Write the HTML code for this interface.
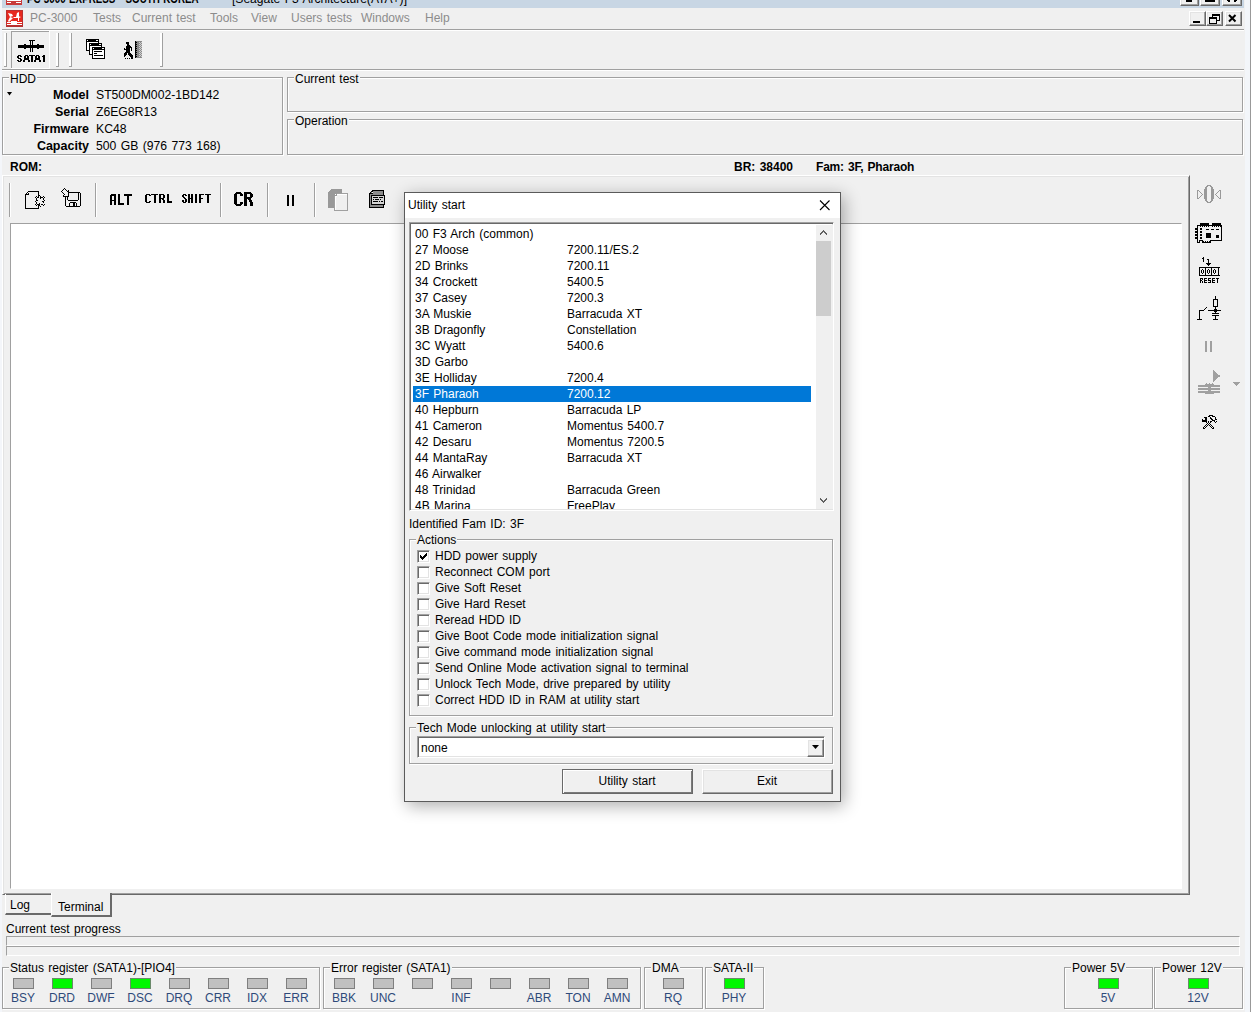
<!DOCTYPE html><html><head><meta charset="utf-8"><style>
*{margin:0;padding:0;box-sizing:border-box}
html,body{width:1251px;height:1012px;overflow:hidden;background:#f0f0f0;font-family:"Liberation Sans",sans-serif;font-size:12px;color:#000;word-spacing:1px}
.a{position:absolute}
.t{position:absolute;white-space:nowrap;font-size:12px;line-height:12px}
.b{font-weight:bold}
.r{text-align:right}
.gb{position:absolute;border:1px solid #a0a0a0;box-shadow:1px 1px 0 #fff, inset 1px 1px 0 #fff}
.gl{position:absolute;white-space:nowrap;font-size:12px;line-height:12px;background:#f0f0f0;padding:0 1px}
.led{position:absolute;width:21px;height:11px;background:#c0c0c0;border:1px solid #7f7f7f}
.led.on{background:#00f800;border-color:#6a8a6a}
.ll{position:absolute;white-space:nowrap;font-size:12px;line-height:12px;color:#2e4a7a;width:40px;text-align:center}
.menu{color:#8c8c8c}
.cb{position:absolute;width:13px;height:13px;background:#fff;border-top:1px solid #a0a0a0;border-left:1px solid #a0a0a0;border-right:1px solid #fff;border-bottom:1px solid #fff;box-shadow:inset 1px 1px 0 #696969, inset -1px -1px 0 #e3e3e3}
.btn{position:absolute;background:#f0f0f0;border-top:1px solid #fff;border-left:1px solid #fff;border-right:1px solid #696969;border-bottom:1px solid #696969;box-shadow:inset -1px -1px 0 #a0a0a0, inset 1px 1px 0 #e3e3e3}
</style></head><body>
<div class="a" style="left:0px;top:0px;width:2px;height:1012px;background:#f4f6fa;"></div>
<div class="a" style="left:2px;top:0px;width:1242px;height:8px;background:#c8d6e4;"></div>
<div class="a" style="left:1245px;top:0px;width:5px;height:1012px;background:#f3f6fa;"></div>
<div class="a" style="left:1250px;top:0px;width:1px;height:1012px;background:#999;"></div>
<svg class="a" style="left:0;top:0" width="420" height="8"><text x="27" y="3" font-family="Liberation Sans" font-weight="bold" font-size="12" textLength="178" lengthAdjust="spacingAndGlyphs">PC-3000 EXPRESS - SOUTH KOREA -</text><text x="232" y="3" font-family="Liberation Sans" font-size="12" textLength="175" lengthAdjust="spacingAndGlyphs">[Seagate F3 Architecture(ATA+)]</text></svg>
<div class="a" style="left:6px;top:0px;width:16px;height:5px;background:#d03030;"></div>
<div class="btn" style="left:1180px;top:-8px;width:19px;height:14px"></div>
<div class="btn" style="left:1200px;top:-8px;width:20px;height:14px"></div>
<div class="btn" style="left:1222px;top:-8px;width:20px;height:14px"></div>
<div class="a" style="left:6px;top:10px;width:17px;height:17px;background:#d8302a;"></div>
<div class="t menu" style="left:30px;top:12px;">PC-3000</div>
<div class="t menu" style="left:93px;top:12px;">Tests</div>
<div class="t menu" style="left:132px;top:12px;">Current test</div>
<div class="t menu" style="left:210px;top:12px;">Tools</div>
<div class="t menu" style="left:251px;top:12px;">View</div>
<div class="t menu" style="left:291px;top:12px;">Users tests</div>
<div class="t menu" style="left:361px;top:12px;">Windows</div>
<div class="t menu" style="left:425px;top:12px;">Help</div>
<div class="btn" style="left:1189px;top:11px;width:17px;height:15px"></div>
<div class="btn" style="left:1206px;top:11px;width:17px;height:15px"></div>
<div class="btn" style="left:1225px;top:11px;width:17px;height:15px"></div>
<div class="a" style="left:2px;top:29px;width:1242px;height:1px;background:#a0a0a0;"></div>
<div class="a" style="left:2px;top:30px;width:1242px;height:1px;background:#fff;"></div>
<div class="a" style="left:2px;top:69px;width:1242px;height:1px;background:#a0a0a0;"></div>
<div class="a" style="left:2px;top:70px;width:1242px;height:1px;background:#fff;"></div>
<div class="gb" style="left:2px;top:77px;width:281px;height:78px"></div>
<div class="gl" style="left:9px;top:73px">HDD</div>
<div class="t b r" style="left:0px;width:89px;top:89px;font-size:12.5px">Model</div>
<div class="t " style="left:96px;top:89px;font-size:12.2px">ST500DM002-1BD142</div>
<div class="t b r" style="left:0px;width:89px;top:106px;font-size:12.5px">Serial</div>
<div class="t " style="left:96px;top:106px;font-size:12.2px">Z6EG8R13</div>
<div class="t b r" style="left:0px;width:89px;top:123px;font-size:12.5px">Firmware</div>
<div class="t " style="left:96px;top:123px;font-size:12.2px">KC48</div>
<div class="t b r" style="left:0px;width:89px;top:140px;font-size:12.5px">Capacity</div>
<div class="t " style="left:96px;top:140px;font-size:12.2px">500 GB (976 773 168)</div>
<div class="gb" style="left:287px;top:77px;width:956px;height:35px"></div>
<div class="gl" style="left:294px;top:73px">Current test</div>
<div class="gb" style="left:287px;top:119px;width:956px;height:36px"></div>
<div class="gl" style="left:294px;top:115px">Operation</div>
<div class="t b" style="left:10px;top:161px;">ROM:</div>
<div class="t b" style="left:734px;top:161px;">BR: 38400</div>
<div class="t b" style="left:816px;top:161px;letter-spacing:-0.2px">Fam: 3F, Pharaoh</div>
<div class="a" style="left:2px;top:175px;width:1188px;height:720px;border-top:1px solid #fff;border-left:1px solid #fff;border-right:1px solid #696969;border-bottom:1px solid #696969;box-shadow:inset 1px 1px 0 #e3e3e3, inset -1px -1px 0 #a0a0a0"></div>
<div class="a" style="left:10px;top:223px;width:1172px;height:666px;background:#fff;border-top:1px solid #a0a0a0;border-left:1px solid #a0a0a0;border-right:1px solid #fff;border-bottom:1px solid #fff"></div>
<div class="a" style="left:5px;top:894px;width:46px;height:21px;border-bottom:2px solid #6a6a6a;border-left:1px solid #fff"></div>
<div class="t " style="left:10px;top:899px;">Log</div>
<div class="a" style="left:51px;top:893px;width:61px;height:24px;background:#f0f0f0;border-right:2px solid #6a6a6a;border-bottom:2px solid #6a6a6a;border-left:1px solid #fff"></div>
<div class="t " style="left:58px;top:901px;">Terminal</div>
<div class="t " style="left:6px;top:923px;">Current test progress</div>
<div class="a" style="left:6px;top:936px;width:1234px;height:10px;background:#f0f0f0;border-top:1px solid #a0a0a0;border-left:1px solid #a0a0a0;border-right:1px solid #fff;border-bottom:1px solid #fff"></div>
<div class="a" style="left:6px;top:946px;width:1234px;height:10px;background:#f0f0f0;border-top:1px solid #a0a0a0;border-left:1px solid #a0a0a0;border-right:1px solid #fff;border-bottom:1px solid #fff"></div>
<div class="gb" style="left:2px;top:967px;width:318px;height:42px"></div>
<div class="gl" style="left:9px;top:962px">Status register (SATA1)-[PIO4]</div>
<div class="led" style="left:13px;top:978px"></div>
<div class="ll" style="left:3px;top:992px">BSY</div>
<div class="led on" style="left:52px;top:978px"></div>
<div class="ll" style="left:42px;top:992px">DRD</div>
<div class="led" style="left:91px;top:978px"></div>
<div class="ll" style="left:81px;top:992px">DWF</div>
<div class="led on" style="left:130px;top:978px"></div>
<div class="ll" style="left:120px;top:992px">DSC</div>
<div class="led" style="left:169px;top:978px"></div>
<div class="ll" style="left:159px;top:992px">DRQ</div>
<div class="led" style="left:208px;top:978px"></div>
<div class="ll" style="left:198px;top:992px">CRR</div>
<div class="led" style="left:247px;top:978px"></div>
<div class="ll" style="left:237px;top:992px">IDX</div>
<div class="led" style="left:286px;top:978px"></div>
<div class="ll" style="left:276px;top:992px">ERR</div>
<div class="gb" style="left:323px;top:967px;width:318px;height:42px"></div>
<div class="gl" style="left:330px;top:962px">Error register (SATA1)</div>
<div class="led" style="left:334px;top:978px"></div>
<div class="ll" style="left:324px;top:992px">BBK</div>
<div class="led" style="left:373px;top:978px"></div>
<div class="ll" style="left:363px;top:992px">UNC</div>
<div class="led" style="left:412px;top:978px"></div>
<div class="ll" style="left:402px;top:992px"></div>
<div class="led" style="left:451px;top:978px"></div>
<div class="ll" style="left:441px;top:992px">INF</div>
<div class="led" style="left:490px;top:978px"></div>
<div class="ll" style="left:480px;top:992px"></div>
<div class="led" style="left:529px;top:978px"></div>
<div class="ll" style="left:519px;top:992px">ABR</div>
<div class="led" style="left:568px;top:978px"></div>
<div class="ll" style="left:558px;top:992px">TON</div>
<div class="led" style="left:607px;top:978px"></div>
<div class="ll" style="left:597px;top:992px">AMN</div>
<div class="gb" style="left:644px;top:967px;width:59px;height:42px"></div>
<div class="gl" style="left:651px;top:962px">DMA</div>
<div class="led" style="left:663px;top:978px"></div>
<div class="ll" style="left:653px;top:992px">RQ</div>
<div class="gb" style="left:705px;top:967px;width:59px;height:42px"></div>
<div class="gl" style="left:712px;top:962px">SATA-II</div>
<div class="led on" style="left:724px;top:978px"></div>
<div class="ll" style="left:714px;top:992px">PHY</div>
<div class="gb" style="left:1064px;top:967px;width:89px;height:42px"></div>
<div class="gl" style="left:1071px;top:962px">Power 5V</div>
<div class="led on" style="left:1098px;top:978px"></div>
<div class="ll" style="left:1088px;top:992px">5V</div>
<div class="gb" style="left:1154px;top:967px;width:89px;height:42px"></div>
<div class="gl" style="left:1161px;top:962px">Power 12V</div>
<div class="led on" style="left:1188px;top:978px"></div>
<div class="ll" style="left:1178px;top:992px">12V</div>
<svg class="a" style="left:0;top:0" width="1251" height="1012" shape-rendering="crispEdges">
<rect x="6" y="0" width="16" height="5" fill="#c83a3a"/><rect x="7" y="0" width="14" height="1" fill="#fff"/><rect x="7" y="2" width="4" height="1" fill="#fff"/><rect x="16" y="2" width="5" height="1" fill="#fff"/>
<rect x="6" y="10" width="17" height="17" fill="#b83030"/><rect x="7" y="11" width="15" height="14" fill="#e8281e"/>
<rect x="7" y="22" width="15" height="1" fill="#fff"/><rect x="7" y="24" width="15" height="1" fill="#fff"/><rect x="11" y="21" width="6" height="3" fill="#fff"/>
<path d="M8 13 L12 14 L13 16 L10 17 Z M10 17 L13 18 L9 22 L8 21 Z M13 17 L19 17 L19 21 L18 21 L18 18 L14 18 Z M17 13 L19 12 L19 17 L16 17 Z M18 16 L21 17 L19 18Z" fill="#fff" shape-rendering="auto"/>
<rect x="11" y="31" width="38" height="1" fill="#a0a0a0"/><rect x="11" y="31" width="1" height="37" fill="#a0a0a0"/><rect x="49" y="31" width="1" height="37" fill="#fff"/><rect x="11" y="68" width="39" height="1" fill="#fff"/>
<rect x="4" y="33" width="2" height="34" fill="#fff"/><rect x="6" y="33" width="1" height="34" fill="#a0a0a0"/><rect x="4" y="66" width="3" height="1" fill="#a0a0a0"/>
<rect x="56" y="33" width="2" height="34" fill="#fff"/><rect x="58" y="33" width="1" height="34" fill="#a0a0a0"/><rect x="56" y="66" width="3" height="1" fill="#a0a0a0"/>
<rect x="69" y="33" width="2" height="34" fill="#fff"/><rect x="71" y="33" width="1" height="34" fill="#a0a0a0"/><rect x="69" y="66" width="3" height="1" fill="#a0a0a0"/>
<rect x="160" y="33" width="2" height="34" fill="#fff"/><rect x="162" y="33" width="1" height="34" fill="#a0a0a0"/><rect x="160" y="66" width="3" height="1" fill="#a0a0a0"/>
<rect x="29" y="40" width="1" height="1" fill="#000"/>
<rect x="30" y="40" width="1" height="1" fill="#000"/>
<rect x="31" y="40" width="1" height="1" fill="#000"/>
<rect x="32" y="40" width="1" height="1" fill="#000"/>
<rect x="33" y="40" width="1" height="1" fill="#000"/>
<rect x="34" y="40" width="1" height="1" fill="#000"/>
<rect x="30" y="41" width="1" height="1" fill="#000"/>
<rect x="32" y="41" width="1" height="1" fill="#000"/>
<rect x="30" y="42" width="1" height="1" fill="#000"/>
<rect x="32" y="42" width="1" height="1" fill="#000"/>
<rect x="30" y="43" width="1" height="1" fill="#000"/>
<rect x="32" y="43" width="1" height="1" fill="#000"/>
<rect x="24" y="44" width="1" height="1" fill="#000"/>
<rect x="25" y="44" width="1" height="1" fill="#000"/>
<rect x="30" y="44" width="1" height="1" fill="#000"/>
<rect x="32" y="44" width="1" height="1" fill="#000"/>
<rect x="37" y="44" width="1" height="1" fill="#000"/>
<rect x="38" y="44" width="1" height="1" fill="#000"/>
<rect x="18" y="45" width="1" height="1" fill="#000"/>
<rect x="19" y="45" width="1" height="1" fill="#000"/>
<rect x="20" y="45" width="1" height="1" fill="#000"/>
<rect x="21" y="45" width="1" height="1" fill="#000"/>
<rect x="22" y="45" width="1" height="1" fill="#000"/>
<rect x="23" y="45" width="1" height="1" fill="#000"/>
<rect x="24" y="45" width="1" height="1" fill="#000"/>
<rect x="25" y="45" width="1" height="1" fill="#000"/>
<rect x="26" y="45" width="1" height="1" fill="#000"/>
<rect x="27" y="45" width="1" height="1" fill="#000"/>
<rect x="28" y="45" width="1" height="1" fill="#000"/>
<rect x="29" y="45" width="1" height="1" fill="#000"/>
<rect x="30" y="45" width="1" height="1" fill="#000"/>
<rect x="31" y="45" width="1" height="1" fill="#000"/>
<rect x="32" y="45" width="1" height="1" fill="#000"/>
<rect x="33" y="45" width="1" height="1" fill="#000"/>
<rect x="34" y="45" width="1" height="1" fill="#000"/>
<rect x="35" y="45" width="1" height="1" fill="#000"/>
<rect x="36" y="45" width="1" height="1" fill="#000"/>
<rect x="37" y="45" width="1" height="1" fill="#000"/>
<rect x="38" y="45" width="1" height="1" fill="#000"/>
<rect x="39" y="45" width="1" height="1" fill="#000"/>
<rect x="40" y="45" width="1" height="1" fill="#000"/>
<rect x="41" y="45" width="1" height="1" fill="#000"/>
<rect x="42" y="45" width="1" height="1" fill="#000"/>
<rect x="43" y="45" width="1" height="1" fill="#000"/>
<rect x="18" y="46" width="1" height="1" fill="#000"/>
<rect x="19" y="46" width="1" height="1" fill="#000"/>
<rect x="20" y="46" width="1" height="1" fill="#000"/>
<rect x="21" y="46" width="1" height="1" fill="#000"/>
<rect x="22" y="46" width="1" height="1" fill="#000"/>
<rect x="23" y="46" width="1" height="1" fill="#000"/>
<rect x="24" y="46" width="1" height="1" fill="#000"/>
<rect x="25" y="46" width="1" height="1" fill="#000"/>
<rect x="26" y="46" width="1" height="1" fill="#000"/>
<rect x="27" y="46" width="1" height="1" fill="#000"/>
<rect x="28" y="46" width="1" height="1" fill="#000"/>
<rect x="29" y="46" width="1" height="1" fill="#000"/>
<rect x="30" y="46" width="1" height="1" fill="#000"/>
<rect x="31" y="46" width="1" height="1" fill="#000"/>
<rect x="32" y="46" width="1" height="1" fill="#000"/>
<rect x="33" y="46" width="1" height="1" fill="#000"/>
<rect x="34" y="46" width="1" height="1" fill="#000"/>
<rect x="35" y="46" width="1" height="1" fill="#000"/>
<rect x="36" y="46" width="1" height="1" fill="#000"/>
<rect x="37" y="46" width="1" height="1" fill="#000"/>
<rect x="38" y="46" width="1" height="1" fill="#000"/>
<rect x="39" y="46" width="1" height="1" fill="#000"/>
<rect x="40" y="46" width="1" height="1" fill="#000"/>
<rect x="41" y="46" width="1" height="1" fill="#000"/>
<rect x="42" y="46" width="1" height="1" fill="#000"/>
<rect x="43" y="46" width="1" height="1" fill="#000"/>
<rect x="18" y="47" width="1" height="1" fill="#000"/>
<rect x="19" y="47" width="1" height="1" fill="#000"/>
<rect x="20" y="47" width="1" height="1" fill="#000"/>
<rect x="21" y="47" width="1" height="1" fill="#000"/>
<rect x="22" y="47" width="1" height="1" fill="#000"/>
<rect x="23" y="47" width="1" height="1" fill="#000"/>
<rect x="24" y="47" width="1" height="1" fill="#000"/>
<rect x="25" y="47" width="1" height="1" fill="#000"/>
<rect x="26" y="47" width="1" height="1" fill="#000"/>
<rect x="27" y="47" width="1" height="1" fill="#000"/>
<rect x="28" y="47" width="1" height="1" fill="#000"/>
<rect x="29" y="47" width="1" height="1" fill="#000"/>
<rect x="30" y="47" width="1" height="1" fill="#000"/>
<rect x="31" y="47" width="1" height="1" fill="#000"/>
<rect x="32" y="47" width="1" height="1" fill="#000"/>
<rect x="33" y="47" width="1" height="1" fill="#000"/>
<rect x="34" y="47" width="1" height="1" fill="#000"/>
<rect x="35" y="47" width="1" height="1" fill="#000"/>
<rect x="36" y="47" width="1" height="1" fill="#000"/>
<rect x="37" y="47" width="1" height="1" fill="#000"/>
<rect x="38" y="47" width="1" height="1" fill="#000"/>
<rect x="39" y="47" width="1" height="1" fill="#000"/>
<rect x="40" y="47" width="1" height="1" fill="#000"/>
<rect x="41" y="47" width="1" height="1" fill="#000"/>
<rect x="42" y="47" width="1" height="1" fill="#000"/>
<rect x="43" y="47" width="1" height="1" fill="#000"/>
<rect x="24" y="48" width="1" height="1" fill="#000"/>
<rect x="25" y="48" width="1" height="1" fill="#000"/>
<rect x="30" y="48" width="1" height="1" fill="#000"/>
<rect x="32" y="48" width="1" height="1" fill="#000"/>
<rect x="37" y="48" width="1" height="1" fill="#000"/>
<rect x="38" y="48" width="1" height="1" fill="#000"/>
<rect x="30" y="49" width="1" height="1" fill="#000"/>
<rect x="32" y="49" width="1" height="1" fill="#000"/>
<rect x="30" y="50" width="1" height="1" fill="#000"/>
<rect x="32" y="50" width="1" height="1" fill="#000"/>
<rect x="30" y="51" width="1" height="1" fill="#000"/>
<rect x="32" y="51" width="1" height="1" fill="#000"/>
<rect x="18" y="55" width="1" height="1" fill="#000"/>
<rect x="19" y="55" width="1" height="1" fill="#000"/>
<rect x="20" y="55" width="1" height="1" fill="#000"/>
<rect x="25" y="55" width="1" height="1" fill="#000"/>
<rect x="26" y="55" width="1" height="1" fill="#000"/>
<rect x="27" y="55" width="1" height="1" fill="#000"/>
<rect x="29" y="55" width="1" height="1" fill="#000"/>
<rect x="30" y="55" width="1" height="1" fill="#000"/>
<rect x="31" y="55" width="1" height="1" fill="#000"/>
<rect x="32" y="55" width="1" height="1" fill="#000"/>
<rect x="33" y="55" width="1" height="1" fill="#000"/>
<rect x="34" y="55" width="1" height="1" fill="#000"/>
<rect x="36" y="55" width="1" height="1" fill="#000"/>
<rect x="37" y="55" width="1" height="1" fill="#000"/>
<rect x="38" y="55" width="1" height="1" fill="#000"/>
<rect x="43" y="55" width="1" height="1" fill="#000"/>
<rect x="44" y="55" width="1" height="1" fill="#000"/>
<rect x="17" y="56" width="1" height="1" fill="#000"/>
<rect x="18" y="56" width="1" height="1" fill="#000"/>
<rect x="20" y="56" width="1" height="1" fill="#000"/>
<rect x="21" y="56" width="1" height="1" fill="#000"/>
<rect x="24" y="56" width="1" height="1" fill="#000"/>
<rect x="25" y="56" width="1" height="1" fill="#000"/>
<rect x="27" y="56" width="1" height="1" fill="#000"/>
<rect x="28" y="56" width="1" height="1" fill="#000"/>
<rect x="31" y="56" width="1" height="1" fill="#000"/>
<rect x="32" y="56" width="1" height="1" fill="#000"/>
<rect x="35" y="56" width="1" height="1" fill="#000"/>
<rect x="36" y="56" width="1" height="1" fill="#000"/>
<rect x="38" y="56" width="1" height="1" fill="#000"/>
<rect x="39" y="56" width="1" height="1" fill="#000"/>
<rect x="42" y="56" width="1" height="1" fill="#000"/>
<rect x="43" y="56" width="1" height="1" fill="#000"/>
<rect x="44" y="56" width="1" height="1" fill="#000"/>
<rect x="17" y="57" width="1" height="1" fill="#000"/>
<rect x="18" y="57" width="1" height="1" fill="#000"/>
<rect x="24" y="57" width="1" height="1" fill="#000"/>
<rect x="25" y="57" width="1" height="1" fill="#000"/>
<rect x="27" y="57" width="1" height="1" fill="#000"/>
<rect x="28" y="57" width="1" height="1" fill="#000"/>
<rect x="31" y="57" width="1" height="1" fill="#000"/>
<rect x="32" y="57" width="1" height="1" fill="#000"/>
<rect x="35" y="57" width="1" height="1" fill="#000"/>
<rect x="36" y="57" width="1" height="1" fill="#000"/>
<rect x="38" y="57" width="1" height="1" fill="#000"/>
<rect x="39" y="57" width="1" height="1" fill="#000"/>
<rect x="43" y="57" width="1" height="1" fill="#000"/>
<rect x="44" y="57" width="1" height="1" fill="#000"/>
<rect x="18" y="58" width="1" height="1" fill="#000"/>
<rect x="19" y="58" width="1" height="1" fill="#000"/>
<rect x="20" y="58" width="1" height="1" fill="#000"/>
<rect x="24" y="58" width="1" height="1" fill="#000"/>
<rect x="25" y="58" width="1" height="1" fill="#000"/>
<rect x="26" y="58" width="1" height="1" fill="#000"/>
<rect x="27" y="58" width="1" height="1" fill="#000"/>
<rect x="28" y="58" width="1" height="1" fill="#000"/>
<rect x="31" y="58" width="1" height="1" fill="#000"/>
<rect x="32" y="58" width="1" height="1" fill="#000"/>
<rect x="35" y="58" width="1" height="1" fill="#000"/>
<rect x="36" y="58" width="1" height="1" fill="#000"/>
<rect x="37" y="58" width="1" height="1" fill="#000"/>
<rect x="38" y="58" width="1" height="1" fill="#000"/>
<rect x="39" y="58" width="1" height="1" fill="#000"/>
<rect x="43" y="58" width="1" height="1" fill="#000"/>
<rect x="44" y="58" width="1" height="1" fill="#000"/>
<rect x="20" y="59" width="1" height="1" fill="#000"/>
<rect x="21" y="59" width="1" height="1" fill="#000"/>
<rect x="24" y="59" width="1" height="1" fill="#000"/>
<rect x="25" y="59" width="1" height="1" fill="#000"/>
<rect x="26" y="59" width="1" height="1" fill="#000"/>
<rect x="27" y="59" width="1" height="1" fill="#000"/>
<rect x="28" y="59" width="1" height="1" fill="#000"/>
<rect x="31" y="59" width="1" height="1" fill="#000"/>
<rect x="32" y="59" width="1" height="1" fill="#000"/>
<rect x="35" y="59" width="1" height="1" fill="#000"/>
<rect x="36" y="59" width="1" height="1" fill="#000"/>
<rect x="37" y="59" width="1" height="1" fill="#000"/>
<rect x="38" y="59" width="1" height="1" fill="#000"/>
<rect x="39" y="59" width="1" height="1" fill="#000"/>
<rect x="43" y="59" width="1" height="1" fill="#000"/>
<rect x="44" y="59" width="1" height="1" fill="#000"/>
<rect x="17" y="60" width="1" height="1" fill="#000"/>
<rect x="18" y="60" width="1" height="1" fill="#000"/>
<rect x="20" y="60" width="1" height="1" fill="#000"/>
<rect x="21" y="60" width="1" height="1" fill="#000"/>
<rect x="23" y="60" width="1" height="1" fill="#000"/>
<rect x="24" y="60" width="1" height="1" fill="#000"/>
<rect x="28" y="60" width="1" height="1" fill="#000"/>
<rect x="29" y="60" width="1" height="1" fill="#000"/>
<rect x="31" y="60" width="1" height="1" fill="#000"/>
<rect x="32" y="60" width="1" height="1" fill="#000"/>
<rect x="34" y="60" width="1" height="1" fill="#000"/>
<rect x="35" y="60" width="1" height="1" fill="#000"/>
<rect x="39" y="60" width="1" height="1" fill="#000"/>
<rect x="40" y="60" width="1" height="1" fill="#000"/>
<rect x="43" y="60" width="1" height="1" fill="#000"/>
<rect x="44" y="60" width="1" height="1" fill="#000"/>
<rect x="18" y="61" width="1" height="1" fill="#000"/>
<rect x="19" y="61" width="1" height="1" fill="#000"/>
<rect x="20" y="61" width="1" height="1" fill="#000"/>
<rect x="23" y="61" width="1" height="1" fill="#000"/>
<rect x="24" y="61" width="1" height="1" fill="#000"/>
<rect x="28" y="61" width="1" height="1" fill="#000"/>
<rect x="29" y="61" width="1" height="1" fill="#000"/>
<rect x="31" y="61" width="1" height="1" fill="#000"/>
<rect x="32" y="61" width="1" height="1" fill="#000"/>
<rect x="34" y="61" width="1" height="1" fill="#000"/>
<rect x="35" y="61" width="1" height="1" fill="#000"/>
<rect x="39" y="61" width="1" height="1" fill="#000"/>
<rect x="40" y="61" width="1" height="1" fill="#000"/>
<rect x="43" y="61" width="1" height="1" fill="#000"/>
<rect x="44" y="61" width="1" height="1" fill="#000"/>
<rect x="86" y="39" width="13" height="12" fill="#000"/><rect x="87" y="42" width="11" height="8" fill="#fff"/><rect x="87" y="40" width="1" height="1" fill="#fff"/><rect x="96" y="40" width="2" height="1" fill="#fff"/>
<rect x="89" y="43" width="13" height="12" fill="#000"/><rect x="90" y="46" width="11" height="8" fill="#fff"/><rect x="90" y="44" width="1" height="1" fill="#fff"/><rect x="99" y="44" width="2" height="1" fill="#fff"/>
<rect x="92" y="47" width="13" height="12" fill="#000"/><rect x="93" y="50" width="11" height="8" fill="#fff"/><rect x="93" y="48" width="1" height="1" fill="#fff"/><rect x="102" y="48" width="2" height="1" fill="#fff"/>
<rect x="94" y="51" width="8" height="1" fill="#000"/><rect x="94" y="53" width="3" height="1" fill="#000"/><rect x="94" y="55" width="9" height="1" fill="#000"/>
<rect x="126" y="42" width="1" height="1" fill="#000"/>
<rect x="127" y="42" width="1" height="1" fill="#000"/>
<rect x="128" y="42" width="1" height="1" fill="#000"/>
<rect x="126" y="43" width="1" height="1" fill="#000"/>
<rect x="127" y="43" width="1" height="1" fill="#000"/>
<rect x="128" y="43" width="1" height="1" fill="#000"/>
<rect x="127" y="44" width="1" height="1" fill="#000"/>
<rect x="128" y="44" width="1" height="1" fill="#000"/>
<rect x="127" y="45" width="1" height="1" fill="#000"/>
<rect x="128" y="45" width="1" height="1" fill="#000"/>
<rect x="129" y="45" width="1" height="1" fill="#000"/>
<rect x="126" y="46" width="1" height="1" fill="#000"/>
<rect x="127" y="46" width="1" height="1" fill="#000"/>
<rect x="128" y="46" width="1" height="1" fill="#000"/>
<rect x="129" y="46" width="1" height="1" fill="#000"/>
<rect x="130" y="46" width="1" height="1" fill="#000"/>
<rect x="126" y="47" width="1" height="1" fill="#000"/>
<rect x="127" y="47" width="1" height="1" fill="#000"/>
<rect x="128" y="47" width="1" height="1" fill="#000"/>
<rect x="129" y="47" width="1" height="1" fill="#000"/>
<rect x="130" y="47" width="1" height="1" fill="#000"/>
<rect x="131" y="47" width="1" height="1" fill="#000"/>
<rect x="124" y="48" width="1" height="1" fill="#000"/>
<rect x="126" y="48" width="1" height="1" fill="#000"/>
<rect x="127" y="48" width="1" height="1" fill="#000"/>
<rect x="128" y="48" width="1" height="1" fill="#000"/>
<rect x="129" y="48" width="1" height="1" fill="#000"/>
<rect x="131" y="48" width="1" height="1" fill="#000"/>
<rect x="124" y="49" width="1" height="1" fill="#000"/>
<rect x="125" y="49" width="1" height="1" fill="#000"/>
<rect x="126" y="49" width="1" height="1" fill="#000"/>
<rect x="127" y="49" width="1" height="1" fill="#000"/>
<rect x="128" y="49" width="1" height="1" fill="#000"/>
<rect x="129" y="49" width="1" height="1" fill="#000"/>
<rect x="131" y="49" width="1" height="1" fill="#000"/>
<rect x="126" y="50" width="1" height="1" fill="#000"/>
<rect x="127" y="50" width="1" height="1" fill="#000"/>
<rect x="128" y="50" width="1" height="1" fill="#000"/>
<rect x="129" y="50" width="1" height="1" fill="#000"/>
<rect x="131" y="50" width="1" height="1" fill="#000"/>
<rect x="126" y="51" width="1" height="1" fill="#000"/>
<rect x="127" y="51" width="1" height="1" fill="#000"/>
<rect x="128" y="51" width="1" height="1" fill="#000"/>
<rect x="129" y="51" width="1" height="1" fill="#000"/>
<rect x="125" y="52" width="1" height="1" fill="#000"/>
<rect x="126" y="52" width="1" height="1" fill="#000"/>
<rect x="127" y="52" width="1" height="1" fill="#000"/>
<rect x="128" y="52" width="1" height="1" fill="#000"/>
<rect x="129" y="52" width="1" height="1" fill="#000"/>
<rect x="124" y="53" width="1" height="1" fill="#000"/>
<rect x="125" y="53" width="1" height="1" fill="#000"/>
<rect x="126" y="53" width="1" height="1" fill="#000"/>
<rect x="128" y="53" width="1" height="1" fill="#000"/>
<rect x="129" y="53" width="1" height="1" fill="#000"/>
<rect x="130" y="53" width="1" height="1" fill="#000"/>
<rect x="124" y="54" width="1" height="1" fill="#000"/>
<rect x="125" y="54" width="1" height="1" fill="#000"/>
<rect x="126" y="54" width="1" height="1" fill="#000"/>
<rect x="128" y="54" width="1" height="1" fill="#000"/>
<rect x="129" y="54" width="1" height="1" fill="#000"/>
<rect x="130" y="54" width="1" height="1" fill="#000"/>
<rect x="131" y="54" width="1" height="1" fill="#000"/>
<rect x="124" y="55" width="1" height="1" fill="#000"/>
<rect x="125" y="55" width="1" height="1" fill="#000"/>
<rect x="129" y="55" width="1" height="1" fill="#000"/>
<rect x="130" y="55" width="1" height="1" fill="#000"/>
<rect x="131" y="55" width="1" height="1" fill="#000"/>
<rect x="132" y="55" width="1" height="1" fill="#000"/>
<rect x="124" y="56" width="1" height="1" fill="#000"/>
<rect x="130" y="56" width="1" height="1" fill="#000"/>
<rect x="131" y="56" width="1" height="1" fill="#000"/>
<rect x="132" y="56" width="1" height="1" fill="#000"/>
<rect x="131" y="57" width="1" height="1" fill="#000"/>
<rect x="132" y="57" width="1" height="1" fill="#000"/>
<rect x="125" y="58" width="1" height="1" fill="#000"/>
<rect x="127" y="58" width="1" height="1" fill="#000"/>
<rect x="129" y="58" width="1" height="1" fill="#000"/>
<rect x="131" y="58" width="1" height="1" fill="#000"/>
<rect x="132" y="58" width="1" height="1" fill="#000"/>
<rect x="135" y="41" width="1" height="17" fill="#000"/><rect x="137" y="41" width="5" height="17" fill="#8a8a8a"/>
<rect x="136" y="41" width="1" height="1" fill="#8a8a8a"/>
<rect x="136" y="42" width="1" height="1" fill="#000"/>
<rect x="139" y="42" width="1" height="1" fill="#d0d0d0"/>
<rect x="141" y="42" width="1" height="1" fill="#d0d0d0"/>
<rect x="136" y="43" width="1" height="1" fill="#8a8a8a"/>
<rect x="140" y="43" width="1" height="1" fill="#d0d0d0"/>
<rect x="136" y="44" width="1" height="1" fill="#000"/>
<rect x="139" y="44" width="1" height="1" fill="#d0d0d0"/>
<rect x="141" y="44" width="1" height="1" fill="#d0d0d0"/>
<rect x="136" y="45" width="1" height="1" fill="#8a8a8a"/>
<rect x="140" y="45" width="1" height="1" fill="#d0d0d0"/>
<rect x="136" y="46" width="1" height="1" fill="#000"/>
<rect x="139" y="46" width="1" height="1" fill="#d0d0d0"/>
<rect x="141" y="46" width="1" height="1" fill="#d0d0d0"/>
<rect x="136" y="47" width="1" height="1" fill="#8a8a8a"/>
<rect x="140" y="47" width="1" height="1" fill="#d0d0d0"/>
<rect x="136" y="48" width="1" height="1" fill="#000"/>
<rect x="139" y="48" width="1" height="1" fill="#d0d0d0"/>
<rect x="141" y="48" width="1" height="1" fill="#d0d0d0"/>
<rect x="136" y="49" width="1" height="1" fill="#8a8a8a"/>
<rect x="140" y="49" width="1" height="1" fill="#d0d0d0"/>
<rect x="136" y="50" width="1" height="1" fill="#000"/>
<rect x="139" y="50" width="1" height="1" fill="#d0d0d0"/>
<rect x="141" y="50" width="1" height="1" fill="#d0d0d0"/>
<rect x="136" y="51" width="1" height="1" fill="#8a8a8a"/>
<rect x="140" y="51" width="1" height="1" fill="#d0d0d0"/>
<rect x="136" y="52" width="1" height="1" fill="#000"/>
<rect x="139" y="52" width="1" height="1" fill="#d0d0d0"/>
<rect x="141" y="52" width="1" height="1" fill="#d0d0d0"/>
<rect x="136" y="53" width="1" height="1" fill="#8a8a8a"/>
<rect x="140" y="53" width="1" height="1" fill="#d0d0d0"/>
<rect x="136" y="54" width="1" height="1" fill="#000"/>
<rect x="139" y="54" width="1" height="1" fill="#d0d0d0"/>
<rect x="141" y="54" width="1" height="1" fill="#d0d0d0"/>
<rect x="136" y="55" width="1" height="1" fill="#8a8a8a"/>
<rect x="140" y="55" width="1" height="1" fill="#d0d0d0"/>
<rect x="136" y="56" width="1" height="1" fill="#000"/>
<rect x="139" y="56" width="1" height="1" fill="#d0d0d0"/>
<rect x="141" y="56" width="1" height="1" fill="#d0d0d0"/>
<rect x="136" y="57" width="1" height="1" fill="#8a8a8a"/>
<rect x="9" y="183" width="1" height="34" fill="#a0a0a0"/><rect x="10" y="183" width="1" height="34" fill="#fff"/>
<rect x="95" y="183" width="1" height="34" fill="#a0a0a0"/><rect x="96" y="183" width="1" height="34" fill="#fff"/>
<rect x="220" y="183" width="1" height="34" fill="#a0a0a0"/><rect x="221" y="183" width="1" height="34" fill="#fff"/>
<rect x="267" y="183" width="1" height="34" fill="#a0a0a0"/><rect x="268" y="183" width="1" height="34" fill="#fff"/>
<rect x="314" y="183" width="1" height="34" fill="#a0a0a0"/><rect x="315" y="183" width="1" height="34" fill="#fff"/>
<rect x="28" y="191" width="11" height="1" fill="#000"/>
<rect x="27" y="192" width="1" height="1" fill="#000"/>
<rect x="38" y="192" width="1" height="1" fill="#000"/>
<rect x="26" y="193" width="1" height="1" fill="#000"/>
<rect x="28" y="193" width="1" height="1" fill="#000"/>
<rect x="38" y="193" width="1" height="1" fill="#000"/>
<rect x="25" y="194" width="4" height="1" fill="#000"/>
<rect x="38" y="194" width="1" height="1" fill="#000"/>
<rect x="25" y="195" width="1" height="1" fill="#000"/>
<rect x="38" y="195" width="2" height="1" fill="#000"/>
<rect x="25" y="196" width="1" height="1" fill="#000"/>
<rect x="36" y="196" width="1" height="1" fill="#000"/>
<rect x="38" y="196" width="1" height="1" fill="#000"/>
<rect x="40" y="196" width="1" height="1" fill="#000"/>
<rect x="43" y="196" width="1" height="1" fill="#000"/>
<rect x="25" y="197" width="1" height="1" fill="#000"/>
<rect x="35" y="197" width="1" height="1" fill="#000"/>
<rect x="37" y="197" width="2" height="1" fill="#000"/>
<rect x="40" y="197" width="3" height="1" fill="#000"/>
<rect x="44" y="197" width="1" height="1" fill="#000"/>
<rect x="25" y="198" width="1" height="1" fill="#000"/>
<rect x="36" y="198" width="1" height="1" fill="#000"/>
<rect x="40" y="198" width="1" height="1" fill="#000"/>
<rect x="43" y="198" width="1" height="1" fill="#000"/>
<rect x="25" y="199" width="1" height="1" fill="#000"/>
<rect x="36" y="199" width="1" height="1" fill="#000"/>
<rect x="43" y="199" width="1" height="1" fill="#000"/>
<rect x="25" y="200" width="1" height="1" fill="#000"/>
<rect x="36" y="200" width="2" height="1" fill="#000"/>
<rect x="44" y="200" width="1" height="1" fill="#000"/>
<rect x="25" y="201" width="1" height="1" fill="#000"/>
<rect x="35" y="201" width="1" height="1" fill="#000"/>
<rect x="42" y="201" width="2" height="1" fill="#000"/>
<rect x="25" y="202" width="1" height="1" fill="#000"/>
<rect x="36" y="202" width="1" height="1" fill="#000"/>
<rect x="43" y="202" width="1" height="1" fill="#000"/>
<rect x="25" y="203" width="1" height="1" fill="#000"/>
<rect x="36" y="203" width="1" height="1" fill="#000"/>
<rect x="39" y="203" width="1" height="1" fill="#000"/>
<rect x="25" y="204" width="1" height="1" fill="#000"/>
<rect x="35" y="204" width="1" height="1" fill="#000"/>
<rect x="37" y="204" width="3" height="1" fill="#000"/>
<rect x="41" y="204" width="2" height="1" fill="#000"/>
<rect x="44" y="204" width="1" height="1" fill="#000"/>
<rect x="25" y="205" width="1" height="1" fill="#000"/>
<rect x="36" y="205" width="1" height="1" fill="#000"/>
<rect x="38" y="205" width="2" height="1" fill="#000"/>
<rect x="43" y="205" width="1" height="1" fill="#000"/>
<rect x="25" y="206" width="1" height="1" fill="#000"/>
<rect x="38" y="206" width="1" height="1" fill="#000"/>
<rect x="40" y="206" width="1" height="1" fill="#000"/>
<rect x="25" y="207" width="1" height="1" fill="#000"/>
<rect x="38" y="207" width="1" height="1" fill="#000"/>
<rect x="25" y="208" width="14" height="1" fill="#000"/>
<rect x="64" y="188" width="1" height="1" fill="#000"/>
<rect x="63" y="189" width="1" height="1" fill="#000"/>
<rect x="65" y="189" width="1" height="1" fill="#000"/>
<rect x="62" y="190" width="1" height="1" fill="#000"/>
<rect x="66" y="190" width="1" height="1" fill="#000"/>
<rect x="68" y="190" width="1" height="1" fill="#000"/>
<rect x="61" y="191" width="1" height="1" fill="#000"/>
<rect x="67" y="191" width="2" height="1" fill="#000"/>
<rect x="62" y="192" width="1" height="1" fill="#000"/>
<rect x="68" y="192" width="12" height="1" fill="#000"/>
<rect x="63" y="193" width="1" height="1" fill="#000"/>
<rect x="68" y="193" width="1" height="1" fill="#000"/>
<rect x="78" y="193" width="1" height="1" fill="#000"/>
<rect x="80" y="193" width="1" height="1" fill="#000"/>
<rect x="64" y="194" width="1" height="1" fill="#000"/>
<rect x="68" y="194" width="1" height="1" fill="#000"/>
<rect x="78" y="194" width="1" height="1" fill="#000"/>
<rect x="80" y="194" width="1" height="1" fill="#000"/>
<rect x="63" y="195" width="1" height="1" fill="#000"/>
<rect x="68" y="195" width="1" height="1" fill="#000"/>
<rect x="78" y="195" width="1" height="1" fill="#000"/>
<rect x="80" y="195" width="1" height="1" fill="#000"/>
<rect x="63" y="196" width="6" height="1" fill="#000"/>
<rect x="78" y="196" width="1" height="1" fill="#000"/>
<rect x="80" y="196" width="1" height="1" fill="#000"/>
<rect x="65" y="197" width="1" height="1" fill="#000"/>
<rect x="67" y="197" width="1" height="1" fill="#000"/>
<rect x="78" y="197" width="1" height="1" fill="#000"/>
<rect x="80" y="197" width="1" height="1" fill="#000"/>
<rect x="65" y="198" width="1" height="1" fill="#000"/>
<rect x="67" y="198" width="1" height="1" fill="#000"/>
<rect x="78" y="198" width="1" height="1" fill="#000"/>
<rect x="80" y="198" width="1" height="1" fill="#000"/>
<rect x="65" y="199" width="1" height="1" fill="#000"/>
<rect x="67" y="199" width="1" height="1" fill="#000"/>
<rect x="78" y="199" width="1" height="1" fill="#000"/>
<rect x="80" y="199" width="1" height="1" fill="#000"/>
<rect x="65" y="200" width="1" height="1" fill="#000"/>
<rect x="68" y="200" width="10" height="1" fill="#000"/>
<rect x="80" y="200" width="1" height="1" fill="#000"/>
<rect x="65" y="201" width="1" height="1" fill="#000"/>
<rect x="80" y="201" width="1" height="1" fill="#000"/>
<rect x="65" y="202" width="1" height="1" fill="#000"/>
<rect x="70" y="202" width="6" height="1" fill="#000"/>
<rect x="80" y="202" width="1" height="1" fill="#000"/>
<rect x="65" y="203" width="1" height="1" fill="#000"/>
<rect x="69" y="203" width="1" height="1" fill="#000"/>
<rect x="73" y="203" width="2" height="1" fill="#000"/>
<rect x="76" y="203" width="1" height="1" fill="#000"/>
<rect x="80" y="203" width="1" height="1" fill="#000"/>
<rect x="65" y="204" width="1" height="1" fill="#000"/>
<rect x="69" y="204" width="1" height="1" fill="#000"/>
<rect x="73" y="204" width="2" height="1" fill="#000"/>
<rect x="76" y="204" width="1" height="1" fill="#000"/>
<rect x="80" y="204" width="1" height="1" fill="#000"/>
<rect x="65" y="205" width="1" height="1" fill="#000"/>
<rect x="69" y="205" width="1" height="1" fill="#000"/>
<rect x="73" y="205" width="2" height="1" fill="#000"/>
<rect x="76" y="205" width="1" height="1" fill="#000"/>
<rect x="80" y="205" width="1" height="1" fill="#000"/>
<rect x="66" y="206" width="14" height="1" fill="#000"/>
<rect x="111" y="194" width="5" height="1" fill="#000"/>
<rect x="118" y="194" width="2" height="1" fill="#000"/>
<rect x="124" y="194" width="8" height="1" fill="#000"/>
<rect x="110" y="195" width="6" height="1" fill="#000"/>
<rect x="118" y="195" width="2" height="1" fill="#000"/>
<rect x="124" y="195" width="8" height="1" fill="#000"/>
<rect x="110" y="196" width="2" height="1" fill="#000"/>
<rect x="114" y="196" width="2" height="1" fill="#000"/>
<rect x="118" y="196" width="2" height="1" fill="#000"/>
<rect x="127" y="196" width="2" height="1" fill="#000"/>
<rect x="110" y="197" width="2" height="1" fill="#000"/>
<rect x="114" y="197" width="2" height="1" fill="#000"/>
<rect x="118" y="197" width="2" height="1" fill="#000"/>
<rect x="127" y="197" width="2" height="1" fill="#000"/>
<rect x="110" y="198" width="2" height="1" fill="#000"/>
<rect x="114" y="198" width="2" height="1" fill="#000"/>
<rect x="118" y="198" width="2" height="1" fill="#000"/>
<rect x="127" y="198" width="2" height="1" fill="#000"/>
<rect x="110" y="199" width="2" height="1" fill="#000"/>
<rect x="114" y="199" width="2" height="1" fill="#000"/>
<rect x="118" y="199" width="2" height="1" fill="#000"/>
<rect x="127" y="199" width="2" height="1" fill="#000"/>
<rect x="110" y="200" width="6" height="1" fill="#000"/>
<rect x="118" y="200" width="2" height="1" fill="#000"/>
<rect x="127" y="200" width="2" height="1" fill="#000"/>
<rect x="110" y="201" width="2" height="1" fill="#000"/>
<rect x="114" y="201" width="2" height="1" fill="#000"/>
<rect x="118" y="201" width="2" height="1" fill="#000"/>
<rect x="127" y="201" width="2" height="1" fill="#000"/>
<rect x="110" y="202" width="2" height="1" fill="#000"/>
<rect x="114" y="202" width="2" height="1" fill="#000"/>
<rect x="118" y="202" width="2" height="1" fill="#000"/>
<rect x="127" y="202" width="2" height="1" fill="#000"/>
<rect x="110" y="203" width="2" height="1" fill="#000"/>
<rect x="114" y="203" width="2" height="1" fill="#000"/>
<rect x="118" y="203" width="6" height="1" fill="#000"/>
<rect x="127" y="203" width="2" height="1" fill="#000"/>
<rect x="110" y="204" width="2" height="1" fill="#000"/>
<rect x="114" y="204" width="2" height="1" fill="#000"/>
<rect x="118" y="204" width="6" height="1" fill="#000"/>
<rect x="127" y="204" width="2" height="1" fill="#000"/>
<rect x="146" y="194" width="4" height="1" fill="#000"/>
<rect x="151" y="194" width="7" height="1" fill="#000"/>
<rect x="159" y="194" width="5" height="1" fill="#000"/>
<rect x="167" y="194" width="2" height="1" fill="#000"/>
<rect x="145" y="195" width="2" height="1" fill="#000"/>
<rect x="149" y="195" width="2" height="1" fill="#000"/>
<rect x="154" y="195" width="2" height="1" fill="#000"/>
<rect x="159" y="195" width="2" height="1" fill="#000"/>
<rect x="163" y="195" width="2" height="1" fill="#000"/>
<rect x="167" y="195" width="2" height="1" fill="#000"/>
<rect x="145" y="196" width="2" height="1" fill="#000"/>
<rect x="154" y="196" width="2" height="1" fill="#000"/>
<rect x="159" y="196" width="2" height="1" fill="#000"/>
<rect x="163" y="196" width="2" height="1" fill="#000"/>
<rect x="167" y="196" width="2" height="1" fill="#000"/>
<rect x="145" y="197" width="2" height="1" fill="#000"/>
<rect x="154" y="197" width="2" height="1" fill="#000"/>
<rect x="159" y="197" width="2" height="1" fill="#000"/>
<rect x="163" y="197" width="2" height="1" fill="#000"/>
<rect x="167" y="197" width="2" height="1" fill="#000"/>
<rect x="145" y="198" width="2" height="1" fill="#000"/>
<rect x="154" y="198" width="2" height="1" fill="#000"/>
<rect x="159" y="198" width="5" height="1" fill="#000"/>
<rect x="167" y="198" width="2" height="1" fill="#000"/>
<rect x="145" y="199" width="2" height="1" fill="#000"/>
<rect x="154" y="199" width="2" height="1" fill="#000"/>
<rect x="159" y="199" width="2" height="1" fill="#000"/>
<rect x="162" y="199" width="2" height="1" fill="#000"/>
<rect x="167" y="199" width="2" height="1" fill="#000"/>
<rect x="145" y="200" width="2" height="1" fill="#000"/>
<rect x="154" y="200" width="2" height="1" fill="#000"/>
<rect x="159" y="200" width="2" height="1" fill="#000"/>
<rect x="163" y="200" width="2" height="1" fill="#000"/>
<rect x="167" y="200" width="2" height="1" fill="#000"/>
<rect x="145" y="201" width="2" height="1" fill="#000"/>
<rect x="149" y="201" width="2" height="1" fill="#000"/>
<rect x="154" y="201" width="2" height="1" fill="#000"/>
<rect x="159" y="201" width="2" height="1" fill="#000"/>
<rect x="163" y="201" width="2" height="1" fill="#000"/>
<rect x="167" y="201" width="5" height="1" fill="#000"/>
<rect x="146" y="202" width="4" height="1" fill="#000"/>
<rect x="154" y="202" width="2" height="1" fill="#000"/>
<rect x="159" y="202" width="2" height="1" fill="#000"/>
<rect x="163" y="202" width="2" height="1" fill="#000"/>
<rect x="167" y="202" width="5" height="1" fill="#000"/>
<rect x="183" y="194" width="3" height="1" fill="#000"/>
<rect x="188" y="194" width="2" height="1" fill="#000"/>
<rect x="191" y="194" width="2" height="1" fill="#000"/>
<rect x="195" y="194" width="2" height="1" fill="#000"/>
<rect x="199" y="194" width="5" height="1" fill="#000"/>
<rect x="205" y="194" width="6" height="1" fill="#000"/>
<rect x="182" y="195" width="2" height="1" fill="#000"/>
<rect x="185" y="195" width="2" height="1" fill="#000"/>
<rect x="188" y="195" width="2" height="1" fill="#000"/>
<rect x="191" y="195" width="2" height="1" fill="#000"/>
<rect x="195" y="195" width="2" height="1" fill="#000"/>
<rect x="199" y="195" width="2" height="1" fill="#000"/>
<rect x="207" y="195" width="2" height="1" fill="#000"/>
<rect x="182" y="196" width="2" height="1" fill="#000"/>
<rect x="188" y="196" width="2" height="1" fill="#000"/>
<rect x="191" y="196" width="2" height="1" fill="#000"/>
<rect x="195" y="196" width="2" height="1" fill="#000"/>
<rect x="199" y="196" width="2" height="1" fill="#000"/>
<rect x="207" y="196" width="2" height="1" fill="#000"/>
<rect x="183" y="197" width="2" height="1" fill="#000"/>
<rect x="188" y="197" width="2" height="1" fill="#000"/>
<rect x="191" y="197" width="2" height="1" fill="#000"/>
<rect x="195" y="197" width="2" height="1" fill="#000"/>
<rect x="199" y="197" width="2" height="1" fill="#000"/>
<rect x="207" y="197" width="2" height="1" fill="#000"/>
<rect x="184" y="198" width="2" height="1" fill="#000"/>
<rect x="188" y="198" width="5" height="1" fill="#000"/>
<rect x="195" y="198" width="2" height="1" fill="#000"/>
<rect x="199" y="198" width="4" height="1" fill="#000"/>
<rect x="207" y="198" width="2" height="1" fill="#000"/>
<rect x="185" y="199" width="2" height="1" fill="#000"/>
<rect x="188" y="199" width="2" height="1" fill="#000"/>
<rect x="191" y="199" width="2" height="1" fill="#000"/>
<rect x="195" y="199" width="2" height="1" fill="#000"/>
<rect x="199" y="199" width="2" height="1" fill="#000"/>
<rect x="207" y="199" width="2" height="1" fill="#000"/>
<rect x="182" y="200" width="2" height="1" fill="#000"/>
<rect x="185" y="200" width="2" height="1" fill="#000"/>
<rect x="188" y="200" width="2" height="1" fill="#000"/>
<rect x="191" y="200" width="2" height="1" fill="#000"/>
<rect x="195" y="200" width="2" height="1" fill="#000"/>
<rect x="199" y="200" width="2" height="1" fill="#000"/>
<rect x="207" y="200" width="2" height="1" fill="#000"/>
<rect x="182" y="201" width="2" height="1" fill="#000"/>
<rect x="185" y="201" width="2" height="1" fill="#000"/>
<rect x="188" y="201" width="2" height="1" fill="#000"/>
<rect x="191" y="201" width="2" height="1" fill="#000"/>
<rect x="195" y="201" width="2" height="1" fill="#000"/>
<rect x="199" y="201" width="2" height="1" fill="#000"/>
<rect x="207" y="201" width="2" height="1" fill="#000"/>
<rect x="183" y="202" width="3" height="1" fill="#000"/>
<rect x="188" y="202" width="2" height="1" fill="#000"/>
<rect x="191" y="202" width="2" height="1" fill="#000"/>
<rect x="195" y="202" width="2" height="1" fill="#000"/>
<rect x="199" y="202" width="2" height="1" fill="#000"/>
<rect x="207" y="202" width="2" height="1" fill="#000"/>
<rect x="236" y="192" width="5" height="1" fill="#000"/>
<rect x="244" y="192" width="7" height="1" fill="#000"/>
<rect x="235" y="193" width="7" height="1" fill="#000"/>
<rect x="244" y="193" width="8" height="1" fill="#000"/>
<rect x="234" y="194" width="3" height="1" fill="#000"/>
<rect x="240" y="194" width="3" height="1" fill="#000"/>
<rect x="244" y="194" width="3" height="1" fill="#000"/>
<rect x="250" y="194" width="3" height="1" fill="#000"/>
<rect x="234" y="195" width="3" height="1" fill="#000"/>
<rect x="240" y="195" width="3" height="1" fill="#000"/>
<rect x="244" y="195" width="3" height="1" fill="#000"/>
<rect x="250" y="195" width="3" height="1" fill="#000"/>
<rect x="234" y="196" width="3" height="1" fill="#000"/>
<rect x="244" y="196" width="3" height="1" fill="#000"/>
<rect x="250" y="196" width="3" height="1" fill="#000"/>
<rect x="234" y="197" width="3" height="1" fill="#000"/>
<rect x="244" y="197" width="8" height="1" fill="#000"/>
<rect x="234" y="198" width="3" height="1" fill="#000"/>
<rect x="244" y="198" width="7" height="1" fill="#000"/>
<rect x="234" y="199" width="3" height="1" fill="#000"/>
<rect x="244" y="199" width="3" height="1" fill="#000"/>
<rect x="248" y="199" width="3" height="1" fill="#000"/>
<rect x="234" y="200" width="3" height="1" fill="#000"/>
<rect x="244" y="200" width="3" height="1" fill="#000"/>
<rect x="249" y="200" width="3" height="1" fill="#000"/>
<rect x="234" y="201" width="3" height="1" fill="#000"/>
<rect x="244" y="201" width="3" height="1" fill="#000"/>
<rect x="249" y="201" width="3" height="1" fill="#000"/>
<rect x="234" y="202" width="3" height="1" fill="#000"/>
<rect x="240" y="202" width="3" height="1" fill="#000"/>
<rect x="244" y="202" width="3" height="1" fill="#000"/>
<rect x="250" y="202" width="3" height="1" fill="#000"/>
<rect x="234" y="203" width="3" height="1" fill="#000"/>
<rect x="240" y="203" width="3" height="1" fill="#000"/>
<rect x="244" y="203" width="3" height="1" fill="#000"/>
<rect x="250" y="203" width="3" height="1" fill="#000"/>
<rect x="235" y="204" width="7" height="1" fill="#000"/>
<rect x="244" y="204" width="3" height="1" fill="#000"/>
<rect x="250" y="204" width="3" height="1" fill="#000"/>
<rect x="236" y="205" width="5" height="1" fill="#000"/>
<rect x="244" y="205" width="3" height="1" fill="#000"/>
<rect x="250" y="205" width="3" height="1" fill="#000"/>
<rect x="287" y="195" width="2" height="11" fill="#000"/><rect x="292" y="195" width="2" height="11" fill="#000"/>
<path d="M331 189 h11 v19 h-14 v-16 z" fill="#999"/>
<rect x="334" y="193" width="14" height="18" fill="#a0a0a0"/><rect x="335" y="194" width="12" height="16" fill="#fff"/><rect x="336" y="195" width="11" height="15" fill="#f0f0f0"/>
<rect x="334" y="193" width="3" height="3" fill="#999"/><rect x="335" y="194" width="1" height="1" fill="#fff"/><rect x="336" y="196" width="1" height="1" fill="#fff"/>
<path d="M372 190 h12 v18 h-15 v-15 z" fill="#000"/><rect x="370" y="194" width="13" height="13" fill="#8c8c8c"/><rect x="373" y="191" width="10" height="4" fill="#8c8c8c"/>
<rect x="371" y="192" width="1" height="1" fill="#8c8c8c"/><rect x="372" y="192" width="1" height="1" fill="#fff"/>
<rect x="371" y="195" width="14" height="10" fill="#000"/><rect x="372" y="196" width="12" height="8" fill="#d4d4d4"/>
<rect x="373" y="197" width="4" height="1" fill="#000"/>
<rect x="377" y="197" width="1" height="1" fill="#000"/>
<rect x="379" y="197" width="4" height="1" fill="#000"/>
<rect x="373" y="199" width="1" height="1" fill="#000"/>
<rect x="375" y="199" width="4" height="1" fill="#000"/>
<rect x="380" y="199" width="1" height="1" fill="#000"/>
<rect x="373" y="201" width="4" height="1" fill="#000"/>
<rect x="377" y="201" width="1" height="1" fill="#000"/>
<rect x="379" y="201" width="1" height="1" fill="#000"/>
<rect x="381" y="201" width="2" height="1" fill="#000"/>
<rect x="1207" y="185" width="4" height="1" fill="#999"/>
<rect x="1206" y="186" width="2" height="1" fill="#999"/>
<rect x="1210" y="186" width="2" height="1" fill="#999"/>
<rect x="1205" y="187" width="2" height="1" fill="#999"/>
<rect x="1211" y="187" width="2" height="1" fill="#999"/>
<rect x="1205" y="188" width="2" height="1" fill="#999"/>
<rect x="1211" y="188" width="2" height="1" fill="#999"/>
<rect x="1204" y="189" width="3" height="1" fill="#999"/>
<rect x="1211" y="189" width="3" height="1" fill="#999"/>
<rect x="1197" y="190" width="2" height="1" fill="#999"/>
<rect x="1204" y="190" width="3" height="1" fill="#999"/>
<rect x="1211" y="190" width="3" height="1" fill="#999"/>
<rect x="1219" y="190" width="2" height="1" fill="#999"/>
<rect x="1197" y="191" width="1" height="1" fill="#999"/>
<rect x="1199" y="191" width="1" height="1" fill="#999"/>
<rect x="1204" y="191" width="3" height="1" fill="#999"/>
<rect x="1211" y="191" width="3" height="1" fill="#999"/>
<rect x="1218" y="191" width="1" height="1" fill="#999"/>
<rect x="1220" y="191" width="1" height="1" fill="#999"/>
<rect x="1197" y="192" width="1" height="1" fill="#999"/>
<rect x="1200" y="192" width="1" height="1" fill="#999"/>
<rect x="1204" y="192" width="3" height="1" fill="#999"/>
<rect x="1211" y="192" width="3" height="1" fill="#999"/>
<rect x="1217" y="192" width="1" height="1" fill="#999"/>
<rect x="1220" y="192" width="1" height="1" fill="#999"/>
<rect x="1197" y="193" width="1" height="1" fill="#999"/>
<rect x="1201" y="193" width="1" height="1" fill="#999"/>
<rect x="1204" y="193" width="3" height="1" fill="#999"/>
<rect x="1211" y="193" width="3" height="1" fill="#999"/>
<rect x="1216" y="193" width="1" height="1" fill="#999"/>
<rect x="1220" y="193" width="1" height="1" fill="#999"/>
<rect x="1197" y="194" width="1" height="1" fill="#999"/>
<rect x="1202" y="194" width="1" height="1" fill="#999"/>
<rect x="1204" y="194" width="3" height="1" fill="#999"/>
<rect x="1211" y="194" width="3" height="1" fill="#999"/>
<rect x="1215" y="194" width="1" height="1" fill="#999"/>
<rect x="1220" y="194" width="1" height="1" fill="#999"/>
<rect x="1197" y="195" width="1" height="1" fill="#999"/>
<rect x="1201" y="195" width="1" height="1" fill="#999"/>
<rect x="1204" y="195" width="3" height="1" fill="#999"/>
<rect x="1211" y="195" width="3" height="1" fill="#999"/>
<rect x="1216" y="195" width="1" height="1" fill="#999"/>
<rect x="1220" y="195" width="1" height="1" fill="#999"/>
<rect x="1197" y="196" width="1" height="1" fill="#999"/>
<rect x="1200" y="196" width="1" height="1" fill="#999"/>
<rect x="1204" y="196" width="3" height="1" fill="#999"/>
<rect x="1211" y="196" width="3" height="1" fill="#999"/>
<rect x="1217" y="196" width="1" height="1" fill="#999"/>
<rect x="1220" y="196" width="1" height="1" fill="#999"/>
<rect x="1197" y="197" width="1" height="1" fill="#999"/>
<rect x="1199" y="197" width="1" height="1" fill="#999"/>
<rect x="1204" y="197" width="3" height="1" fill="#999"/>
<rect x="1211" y="197" width="3" height="1" fill="#999"/>
<rect x="1218" y="197" width="1" height="1" fill="#999"/>
<rect x="1220" y="197" width="1" height="1" fill="#999"/>
<rect x="1197" y="198" width="2" height="1" fill="#999"/>
<rect x="1204" y="198" width="3" height="1" fill="#999"/>
<rect x="1211" y="198" width="3" height="1" fill="#999"/>
<rect x="1219" y="198" width="2" height="1" fill="#999"/>
<rect x="1205" y="199" width="2" height="1" fill="#999"/>
<rect x="1211" y="199" width="2" height="1" fill="#999"/>
<rect x="1205" y="200" width="2" height="1" fill="#999"/>
<rect x="1211" y="200" width="2" height="1" fill="#999"/>
<rect x="1206" y="201" width="2" height="1" fill="#999"/>
<rect x="1210" y="201" width="2" height="1" fill="#999"/>
<rect x="1207" y="202" width="4" height="1" fill="#999"/>
<rect x="1200" y="223" width="9" height="1" fill="#000"/>
<rect x="1212" y="223" width="9" height="1" fill="#000"/>
<rect x="1200" y="224" width="9" height="1" fill="#000"/>
<rect x="1212" y="224" width="9" height="1" fill="#000"/>
<rect x="1197" y="225" width="25" height="1" fill="#000"/>
<rect x="1197" y="226" width="1" height="1" fill="#000"/>
<rect x="1200" y="226" width="1" height="1" fill="#000"/>
<rect x="1202" y="226" width="1" height="1" fill="#000"/>
<rect x="1204" y="226" width="1" height="1" fill="#000"/>
<rect x="1206" y="226" width="1" height="1" fill="#000"/>
<rect x="1208" y="226" width="1" height="1" fill="#000"/>
<rect x="1212" y="226" width="1" height="1" fill="#000"/>
<rect x="1214" y="226" width="1" height="1" fill="#000"/>
<rect x="1216" y="226" width="1" height="1" fill="#000"/>
<rect x="1218" y="226" width="1" height="1" fill="#000"/>
<rect x="1220" y="226" width="2" height="1" fill="#000"/>
<rect x="1197" y="227" width="1" height="1" fill="#000"/>
<rect x="1221" y="227" width="1" height="1" fill="#000"/>
<rect x="1195" y="228" width="3" height="1" fill="#000"/>
<rect x="1200" y="228" width="2" height="1" fill="#000"/>
<rect x="1221" y="228" width="1" height="1" fill="#000"/>
<rect x="1195" y="229" width="3" height="1" fill="#000"/>
<rect x="1200" y="229" width="2" height="1" fill="#000"/>
<rect x="1206" y="229" width="3" height="1" fill="#000"/>
<rect x="1211" y="229" width="3" height="1" fill="#000"/>
<rect x="1216" y="229" width="3" height="1" fill="#000"/>
<rect x="1221" y="229" width="1" height="1" fill="#000"/>
<rect x="1197" y="230" width="1" height="1" fill="#000"/>
<rect x="1221" y="230" width="1" height="1" fill="#000"/>
<rect x="1195" y="231" width="3" height="1" fill="#000"/>
<rect x="1200" y="231" width="2" height="1" fill="#000"/>
<rect x="1221" y="231" width="1" height="1" fill="#000"/>
<rect x="1195" y="232" width="3" height="1" fill="#000"/>
<rect x="1200" y="232" width="2" height="1" fill="#000"/>
<rect x="1221" y="232" width="1" height="1" fill="#000"/>
<rect x="1197" y="233" width="1" height="1" fill="#000"/>
<rect x="1206" y="233" width="5" height="1" fill="#000"/>
<rect x="1221" y="233" width="1" height="1" fill="#000"/>
<rect x="1195" y="234" width="3" height="1" fill="#000"/>
<rect x="1200" y="234" width="2" height="1" fill="#000"/>
<rect x="1206" y="234" width="5" height="1" fill="#000"/>
<rect x="1221" y="234" width="1" height="1" fill="#000"/>
<rect x="1195" y="235" width="3" height="1" fill="#000"/>
<rect x="1200" y="235" width="2" height="1" fill="#000"/>
<rect x="1206" y="235" width="5" height="1" fill="#000"/>
<rect x="1216" y="235" width="3" height="1" fill="#000"/>
<rect x="1221" y="235" width="1" height="1" fill="#000"/>
<rect x="1197" y="236" width="1" height="1" fill="#000"/>
<rect x="1206" y="236" width="5" height="1" fill="#000"/>
<rect x="1216" y="236" width="3" height="1" fill="#000"/>
<rect x="1221" y="236" width="1" height="1" fill="#000"/>
<rect x="1195" y="237" width="3" height="1" fill="#000"/>
<rect x="1200" y="237" width="2" height="1" fill="#000"/>
<rect x="1206" y="237" width="5" height="1" fill="#000"/>
<rect x="1216" y="237" width="3" height="1" fill="#000"/>
<rect x="1221" y="237" width="1" height="1" fill="#000"/>
<rect x="1195" y="238" width="3" height="1" fill="#000"/>
<rect x="1200" y="238" width="2" height="1" fill="#000"/>
<rect x="1221" y="238" width="1" height="1" fill="#000"/>
<rect x="1197" y="239" width="1" height="1" fill="#000"/>
<rect x="1221" y="239" width="1" height="1" fill="#000"/>
<rect x="1197" y="240" width="1" height="1" fill="#000"/>
<rect x="1199" y="240" width="4" height="1" fill="#000"/>
<rect x="1210" y="240" width="12" height="1" fill="#000"/>
<rect x="1197" y="241" width="1" height="1" fill="#000"/>
<rect x="1199" y="241" width="1" height="1" fill="#000"/>
<rect x="1202" y="241" width="2" height="1" fill="#000"/>
<rect x="1205" y="241" width="1" height="1" fill="#000"/>
<rect x="1207" y="241" width="1" height="1" fill="#000"/>
<rect x="1209" y="241" width="2" height="1" fill="#000"/>
<rect x="1197" y="242" width="3" height="1" fill="#000"/>
<rect x="1202" y="242" width="9" height="1" fill="#000"/>
<rect x="1203" y="257" width="1" height="1" fill="#000"/>
<rect x="1202" y="258" width="2" height="1" fill="#000"/>
<rect x="1203" y="259" width="1" height="1" fill="#000"/>
<rect x="1207" y="259" width="2" height="1" fill="#000"/>
<rect x="1203" y="260" width="1" height="1" fill="#000"/>
<rect x="1208" y="260" width="1" height="1" fill="#000"/>
<rect x="1203" y="261" width="1" height="1" fill="#000"/>
<rect x="1208" y="261" width="1" height="1" fill="#000"/>
<rect x="1208" y="262" width="1" height="1" fill="#000"/>
<rect x="1206" y="263" width="5" height="1" fill="#000"/>
<rect x="1207" y="264" width="3" height="1" fill="#000"/>
<rect x="1208" y="265" width="1" height="1" fill="#000"/>
<rect x="1199" y="267" width="21" height="1" fill="#000"/>
<rect x="1199" y="268" width="1" height="1" fill="#000"/>
<rect x="1205" y="268" width="1" height="1" fill="#000"/>
<rect x="1211" y="268" width="1" height="1" fill="#000"/>
<rect x="1218" y="268" width="1" height="1" fill="#000"/>
<rect x="1199" y="269" width="1" height="1" fill="#000"/>
<rect x="1202" y="269" width="1" height="1" fill="#000"/>
<rect x="1205" y="269" width="1" height="1" fill="#000"/>
<rect x="1208" y="269" width="1" height="1" fill="#000"/>
<rect x="1211" y="269" width="1" height="1" fill="#000"/>
<rect x="1214" y="269" width="1" height="1" fill="#000"/>
<rect x="1218" y="269" width="1" height="1" fill="#000"/>
<rect x="1199" y="270" width="1" height="1" fill="#000"/>
<rect x="1201" y="270" width="1" height="1" fill="#000"/>
<rect x="1203" y="270" width="1" height="1" fill="#000"/>
<rect x="1205" y="270" width="1" height="1" fill="#000"/>
<rect x="1207" y="270" width="1" height="1" fill="#000"/>
<rect x="1209" y="270" width="1" height="1" fill="#000"/>
<rect x="1211" y="270" width="1" height="1" fill="#000"/>
<rect x="1213" y="270" width="1" height="1" fill="#000"/>
<rect x="1215" y="270" width="1" height="1" fill="#000"/>
<rect x="1218" y="270" width="1" height="1" fill="#000"/>
<rect x="1199" y="271" width="1" height="1" fill="#000"/>
<rect x="1201" y="271" width="1" height="1" fill="#000"/>
<rect x="1203" y="271" width="1" height="1" fill="#000"/>
<rect x="1205" y="271" width="1" height="1" fill="#000"/>
<rect x="1207" y="271" width="1" height="1" fill="#000"/>
<rect x="1209" y="271" width="1" height="1" fill="#000"/>
<rect x="1211" y="271" width="1" height="1" fill="#000"/>
<rect x="1213" y="271" width="1" height="1" fill="#000"/>
<rect x="1215" y="271" width="1" height="1" fill="#000"/>
<rect x="1218" y="271" width="1" height="1" fill="#000"/>
<rect x="1199" y="272" width="1" height="1" fill="#000"/>
<rect x="1201" y="272" width="1" height="1" fill="#000"/>
<rect x="1203" y="272" width="1" height="1" fill="#000"/>
<rect x="1205" y="272" width="1" height="1" fill="#000"/>
<rect x="1207" y="272" width="1" height="1" fill="#000"/>
<rect x="1209" y="272" width="1" height="1" fill="#000"/>
<rect x="1211" y="272" width="1" height="1" fill="#000"/>
<rect x="1213" y="272" width="1" height="1" fill="#000"/>
<rect x="1215" y="272" width="1" height="1" fill="#000"/>
<rect x="1218" y="272" width="1" height="1" fill="#000"/>
<rect x="1199" y="273" width="1" height="1" fill="#000"/>
<rect x="1202" y="273" width="1" height="1" fill="#000"/>
<rect x="1205" y="273" width="1" height="1" fill="#000"/>
<rect x="1208" y="273" width="1" height="1" fill="#000"/>
<rect x="1211" y="273" width="1" height="1" fill="#000"/>
<rect x="1214" y="273" width="1" height="1" fill="#000"/>
<rect x="1218" y="273" width="1" height="1" fill="#000"/>
<rect x="1199" y="274" width="1" height="1" fill="#000"/>
<rect x="1205" y="274" width="1" height="1" fill="#000"/>
<rect x="1211" y="274" width="1" height="1" fill="#000"/>
<rect x="1218" y="274" width="1" height="1" fill="#000"/>
<rect x="1199" y="275" width="21" height="1" fill="#000"/>
<rect x="1200" y="278" width="3" height="1" fill="#000"/>
<rect x="1204" y="278" width="3" height="1" fill="#000"/>
<rect x="1208" y="278" width="3" height="1" fill="#000"/>
<rect x="1212" y="278" width="3" height="1" fill="#000"/>
<rect x="1216" y="278" width="3" height="1" fill="#000"/>
<rect x="1200" y="279" width="1" height="1" fill="#000"/>
<rect x="1202" y="279" width="1" height="1" fill="#000"/>
<rect x="1204" y="279" width="1" height="1" fill="#000"/>
<rect x="1208" y="279" width="1" height="1" fill="#000"/>
<rect x="1212" y="279" width="1" height="1" fill="#000"/>
<rect x="1217" y="279" width="1" height="1" fill="#000"/>
<rect x="1200" y="280" width="2" height="1" fill="#000"/>
<rect x="1204" y="280" width="3" height="1" fill="#000"/>
<rect x="1208" y="280" width="3" height="1" fill="#000"/>
<rect x="1212" y="280" width="3" height="1" fill="#000"/>
<rect x="1217" y="280" width="1" height="1" fill="#000"/>
<rect x="1200" y="281" width="1" height="1" fill="#000"/>
<rect x="1202" y="281" width="1" height="1" fill="#000"/>
<rect x="1204" y="281" width="1" height="1" fill="#000"/>
<rect x="1210" y="281" width="1" height="1" fill="#000"/>
<rect x="1212" y="281" width="1" height="1" fill="#000"/>
<rect x="1217" y="281" width="1" height="1" fill="#000"/>
<rect x="1200" y="282" width="1" height="1" fill="#000"/>
<rect x="1202" y="282" width="1" height="1" fill="#000"/>
<rect x="1204" y="282" width="3" height="1" fill="#000"/>
<rect x="1208" y="282" width="3" height="1" fill="#000"/>
<rect x="1212" y="282" width="3" height="1" fill="#000"/>
<rect x="1217" y="282" width="1" height="1" fill="#000"/>
<rect x="1215" y="296" width="1" height="1" fill="#000"/>
<rect x="1215" y="297" width="1" height="1" fill="#000"/>
<rect x="1215" y="298" width="1" height="1" fill="#000"/>
<rect x="1213" y="299" width="5" height="1" fill="#000"/>
<rect x="1213" y="300" width="1" height="1" fill="#000"/>
<rect x="1217" y="300" width="1" height="1" fill="#000"/>
<rect x="1213" y="301" width="1" height="1" fill="#000"/>
<rect x="1217" y="301" width="1" height="1" fill="#000"/>
<rect x="1213" y="302" width="1" height="1" fill="#000"/>
<rect x="1217" y="302" width="1" height="1" fill="#000"/>
<rect x="1213" y="303" width="1" height="1" fill="#000"/>
<rect x="1217" y="303" width="1" height="1" fill="#000"/>
<rect x="1213" y="304" width="1" height="1" fill="#000"/>
<rect x="1217" y="304" width="1" height="1" fill="#000"/>
<rect x="1213" y="305" width="1" height="1" fill="#000"/>
<rect x="1217" y="305" width="1" height="1" fill="#000"/>
<rect x="1213" y="306" width="5" height="1" fill="#000"/>
<rect x="1206" y="307" width="1" height="1" fill="#000"/>
<rect x="1215" y="307" width="1" height="1" fill="#000"/>
<rect x="1205" y="308" width="1" height="1" fill="#000"/>
<rect x="1215" y="308" width="1" height="1" fill="#000"/>
<rect x="1204" y="309" width="1" height="1" fill="#000"/>
<rect x="1214" y="309" width="3" height="1" fill="#000"/>
<rect x="1199" y="310" width="5" height="1" fill="#000"/>
<rect x="1208" y="310" width="13" height="1" fill="#000"/>
<rect x="1199" y="311" width="1" height="1" fill="#000"/>
<rect x="1214" y="311" width="3" height="1" fill="#000"/>
<rect x="1199" y="312" width="1" height="1" fill="#000"/>
<rect x="1215" y="312" width="1" height="1" fill="#000"/>
<rect x="1199" y="313" width="1" height="1" fill="#000"/>
<rect x="1212" y="313" width="7" height="1" fill="#000"/>
<rect x="1199" y="314" width="1" height="1" fill="#000"/>
<rect x="1199" y="315" width="1" height="1" fill="#000"/>
<rect x="1212" y="315" width="7" height="1" fill="#000"/>
<rect x="1199" y="316" width="1" height="1" fill="#000"/>
<rect x="1215" y="316" width="1" height="1" fill="#000"/>
<rect x="1199" y="317" width="1" height="1" fill="#000"/>
<rect x="1215" y="317" width="1" height="1" fill="#000"/>
<rect x="1199" y="318" width="1" height="1" fill="#000"/>
<rect x="1215" y="318" width="1" height="1" fill="#000"/>
<rect x="1197" y="319" width="5" height="1" fill="#000"/>
<rect x="1213" y="319" width="5" height="1" fill="#000"/>
<rect x="1205" y="341" width="2" height="11" fill="#a0a0a0"/><rect x="1210" y="341" width="2" height="11" fill="#a0a0a0"/>
<rect x="1213" y="370" width="1" height="1" fill="#a0a0a0"/>
<rect x="1213" y="371" width="2" height="1" fill="#a0a0a0"/>
<rect x="1213" y="372" width="3" height="1" fill="#a0a0a0"/>
<rect x="1213" y="373" width="4" height="1" fill="#a0a0a0"/>
<rect x="1213" y="374" width="5" height="1" fill="#a0a0a0"/>
<rect x="1213" y="375" width="7" height="1" fill="#a0a0a0"/>
<rect x="1213" y="376" width="7" height="1" fill="#a0a0a0"/>
<rect x="1213" y="377" width="5" height="1" fill="#a0a0a0"/>
<rect x="1213" y="378" width="4" height="1" fill="#a0a0a0"/>
<rect x="1213" y="379" width="3" height="1" fill="#a0a0a0"/>
<rect x="1213" y="380" width="2" height="1" fill="#a0a0a0"/>
<rect x="1213" y="381" width="1" height="1" fill="#a0a0a0"/>
<rect x="1233" y="382" width="7" height="1" fill="#a0a0a0"/>
<rect x="1206" y="383" width="1" height="1" fill="#a0a0a0"/>
<rect x="1209" y="383" width="1" height="1" fill="#a0a0a0"/>
<rect x="1212" y="383" width="1" height="1" fill="#a0a0a0"/>
<rect x="1234" y="383" width="5" height="1" fill="#a0a0a0"/>
<rect x="1205" y="384" width="9" height="1" fill="#a0a0a0"/>
<rect x="1235" y="384" width="3" height="1" fill="#a0a0a0"/>
<rect x="1198" y="385" width="22" height="1" fill="#a0a0a0"/>
<rect x="1236" y="385" width="1" height="1" fill="#a0a0a0"/>
<rect x="1198" y="386" width="22" height="1" fill="#a0a0a0"/>
<rect x="1208" y="387" width="3" height="1" fill="#a0a0a0"/>
<rect x="1198" y="388" width="22" height="1" fill="#a0a0a0"/>
<rect x="1198" y="389" width="22" height="1" fill="#a0a0a0"/>
<rect x="1208" y="390" width="3" height="1" fill="#a0a0a0"/>
<rect x="1198" y="391" width="22" height="1" fill="#a0a0a0"/>
<rect x="1198" y="392" width="22" height="1" fill="#a0a0a0"/>
<rect x="1205" y="393" width="9" height="1" fill="#a0a0a0"/>
<rect x="1209" y="415" width="1" height="1" fill="#000"/>
<rect x="1210" y="415" width="1" height="1" fill="#000"/>
<rect x="1211" y="415" width="1" height="1" fill="#000"/>
<rect x="1212" y="415" width="1" height="1" fill="#000"/>
<rect x="1208" y="416" width="1" height="1" fill="#000"/>
<rect x="1209" y="416" width="1" height="1" fill="#000"/>
<rect x="1212" y="416" width="1" height="1" fill="#000"/>
<rect x="1213" y="416" width="1" height="1" fill="#000"/>
<rect x="1214" y="416" width="1" height="1" fill="#000"/>
<rect x="1204" y="417" width="1" height="1" fill="#000"/>
<rect x="1205" y="417" width="1" height="1" fill="#000"/>
<rect x="1206" y="417" width="1" height="1" fill="#000"/>
<rect x="1210" y="417" width="1" height="1" fill="#000"/>
<rect x="1215" y="417" width="1" height="1" fill="#000"/>
<rect x="1205" y="418" width="1" height="1" fill="#000"/>
<rect x="1206" y="418" width="1" height="1" fill="#000"/>
<rect x="1210" y="418" width="1" height="1" fill="#000"/>
<rect x="1211" y="418" width="1" height="1" fill="#000"/>
<rect x="1215" y="418" width="1" height="1" fill="#000"/>
<rect x="1202" y="419" width="1" height="1" fill="#000"/>
<rect x="1205" y="419" width="1" height="1" fill="#000"/>
<rect x="1206" y="419" width="1" height="1" fill="#000"/>
<rect x="1211" y="419" width="1" height="1" fill="#000"/>
<rect x="1212" y="419" width="1" height="1" fill="#000"/>
<rect x="1215" y="419" width="1" height="1" fill="#000"/>
<rect x="1216" y="419" width="1" height="1" fill="#000"/>
<rect x="1202" y="420" width="1" height="1" fill="#000"/>
<rect x="1203" y="420" width="1" height="1" fill="#000"/>
<rect x="1204" y="420" width="1" height="1" fill="#000"/>
<rect x="1205" y="420" width="1" height="1" fill="#000"/>
<rect x="1206" y="420" width="1" height="1" fill="#000"/>
<rect x="1212" y="420" width="1" height="1" fill="#000"/>
<rect x="1213" y="420" width="1" height="1" fill="#000"/>
<rect x="1214" y="420" width="1" height="1" fill="#000"/>
<rect x="1202" y="421" width="1" height="1" fill="#000"/>
<rect x="1203" y="421" width="1" height="1" fill="#000"/>
<rect x="1204" y="421" width="1" height="1" fill="#000"/>
<rect x="1205" y="421" width="1" height="1" fill="#000"/>
<rect x="1206" y="421" width="1" height="1" fill="#000"/>
<rect x="1208" y="421" width="1" height="1" fill="#000"/>
<rect x="1210" y="421" width="1" height="1" fill="#000"/>
<rect x="1211" y="421" width="1" height="1" fill="#000"/>
<rect x="1214" y="421" width="1" height="1" fill="#000"/>
<rect x="1216" y="421" width="1" height="1" fill="#000"/>
<rect x="1206" y="422" width="1" height="1" fill="#000"/>
<rect x="1208" y="422" width="1" height="1" fill="#000"/>
<rect x="1210" y="422" width="1" height="1" fill="#000"/>
<rect x="1215" y="422" width="1" height="1" fill="#000"/>
<rect x="1207" y="423" width="1" height="1" fill="#000"/>
<rect x="1209" y="423" width="1" height="1" fill="#000"/>
<rect x="1206" y="424" width="1" height="1" fill="#000"/>
<rect x="1208" y="424" width="1" height="1" fill="#000"/>
<rect x="1210" y="424" width="1" height="1" fill="#000"/>
<rect x="1205" y="425" width="1" height="1" fill="#000"/>
<rect x="1207" y="425" width="1" height="1" fill="#000"/>
<rect x="1209" y="425" width="1" height="1" fill="#000"/>
<rect x="1211" y="425" width="1" height="1" fill="#000"/>
<rect x="1204" y="426" width="1" height="1" fill="#000"/>
<rect x="1206" y="426" width="1" height="1" fill="#000"/>
<rect x="1210" y="426" width="1" height="1" fill="#000"/>
<rect x="1212" y="426" width="1" height="1" fill="#000"/>
<rect x="1203" y="427" width="1" height="1" fill="#000"/>
<rect x="1205" y="427" width="1" height="1" fill="#000"/>
<rect x="1211" y="427" width="1" height="1" fill="#000"/>
<rect x="1213" y="427" width="1" height="1" fill="#000"/>
<rect x="1203" y="428" width="1" height="1" fill="#000"/>
<rect x="1204" y="428" width="1" height="1" fill="#000"/>
<rect x="1212" y="428" width="1" height="1" fill="#000"/>
<rect x="1213" y="428" width="1" height="1" fill="#000"/>
<path d="M7 92 h5 l-2.5 3.5 z" fill="#000" shape-rendering="auto"/>
<rect x="1186" y="0" width="6" height="2" fill="#000"/><rect x="1205" y="0" width="10" height="2" fill="#000"/><path d="M1228 0 l2 2 M1236 0 l-2 2" stroke="#000" stroke-width="2"/>
<rect x="1193" y="21" width="7" height="2" fill="#000"/>
<rect x="1212" y="14" width="7" height="6" fill="none" stroke="#000" stroke-width="1"/><rect x="1209.5" y="17.5" width="7" height="5.5" fill="#f0f0f0" stroke="#000" stroke-width="1"/><rect x="1209" y="17" width="8" height="2" fill="#000"/><rect x="1212" y="14" width="8" height="1.5" fill="#000"/>
<path d="M1229 15 l6.5 6.5 M1235.5 15 l-6.5 6.5" stroke="#000" stroke-width="2" shape-rendering="auto"/>
</svg>
<div class="a" style="left:404px;top:192px;width:437px;height:610px;background:#f0f0f0;border:1px solid #5a5a5a;box-shadow:3px 4px 16px rgba(0,0,0,0.32)"></div>
<div class="a" style="left:405px;top:193px;width:435px;height:25px;background:#fff;"></div>
<div class="t " style="left:408px;top:199px;">Utility start</div>
<div class="a" style="left:409px;top:222px;width:425px;height:289px;background:#fff;border-top:1px solid #a0a0a0;border-left:1px solid #a0a0a0;border-right:1px solid #fff;border-bottom:1px solid #fff;box-shadow:inset 1px 1px 0 #696969, inset -1px -1px 0 #e3e3e3"></div>
<div class="a" style="left:411px;top:225px;width:405px;height:284px;overflow:hidden">
<div class="t" style="left:4px;top:3px;color:#000">00 F3 Arch (common)</div>
<div class="t" style="left:4px;top:19px;color:#000">27 Moose</div>
<div class="t" style="left:156px;top:19px;color:#000">7200.11/ES.2</div>
<div class="t" style="left:4px;top:35px;color:#000">2D Brinks</div>
<div class="t" style="left:156px;top:35px;color:#000">7200.11</div>
<div class="t" style="left:4px;top:51px;color:#000">34 Crockett</div>
<div class="t" style="left:156px;top:51px;color:#000">5400.5</div>
<div class="t" style="left:4px;top:67px;color:#000">37 Casey</div>
<div class="t" style="left:156px;top:67px;color:#000">7200.3</div>
<div class="t" style="left:4px;top:83px;color:#000">3A Muskie</div>
<div class="t" style="left:156px;top:83px;color:#000">Barracuda XT</div>
<div class="t" style="left:4px;top:99px;color:#000">3B Dragonfly</div>
<div class="t" style="left:156px;top:99px;color:#000">Constellation</div>
<div class="t" style="left:4px;top:115px;color:#000">3C Wyatt</div>
<div class="t" style="left:156px;top:115px;color:#000">5400.6</div>
<div class="t" style="left:4px;top:131px;color:#000">3D Garbo</div>
<div class="t" style="left:4px;top:147px;color:#000">3E Holliday</div>
<div class="t" style="left:156px;top:147px;color:#000">7200.4</div>
<div class="a" style="left:2px;top:161px;width:398px;height:16px;background:#0078d7"></div>
<div class="t" style="left:4px;top:163px;color:#fff">3F Pharaoh</div>
<div class="t" style="left:156px;top:163px;color:#fff">7200.12</div>
<div class="t" style="left:4px;top:179px;color:#000">40 Hepburn</div>
<div class="t" style="left:156px;top:179px;color:#000">Barracuda LP</div>
<div class="t" style="left:4px;top:195px;color:#000">41 Cameron</div>
<div class="t" style="left:156px;top:195px;color:#000">Momentus 5400.7</div>
<div class="t" style="left:4px;top:211px;color:#000">42 Desaru</div>
<div class="t" style="left:156px;top:211px;color:#000">Momentus 7200.5</div>
<div class="t" style="left:4px;top:227px;color:#000">44 MantaRay</div>
<div class="t" style="left:156px;top:227px;color:#000">Barracuda XT</div>
<div class="t" style="left:4px;top:243px;color:#000">46 Airwalker</div>
<div class="t" style="left:4px;top:259px;color:#000">48 Trinidad</div>
<div class="t" style="left:156px;top:259px;color:#000">Barracuda Green</div>
<div class="t" style="left:4px;top:275px;color:#000">4B Marina</div>
<div class="t" style="left:156px;top:275px;color:#000">FreePlay</div>
</div>
<div class="a" style="left:816px;top:225px;width:17px;height:284px;background:#f0f0f0;"></div>
<div class="a" style="left:816px;top:241px;width:15px;height:75px;background:#cdcdcd;"></div>
<div class="t " style="left:409px;top:518px;">Identified Fam ID: 3F</div>
<div class="gb" style="left:409px;top:539px;width:424px;height:177px"></div>
<div class="gl" style="left:416px;top:534px">Actions</div>
<div class="cb" style="left:417px;top:550px"></div>
<div class="t " style="left:435px;top:550px;">HDD power supply</div>
<div class="cb" style="left:417px;top:566px"></div>
<div class="t " style="left:435px;top:566px;">Reconnect COM port</div>
<div class="cb" style="left:417px;top:582px"></div>
<div class="t " style="left:435px;top:582px;">Give Soft Reset</div>
<div class="cb" style="left:417px;top:598px"></div>
<div class="t " style="left:435px;top:598px;">Give Hard Reset</div>
<div class="cb" style="left:417px;top:614px"></div>
<div class="t " style="left:435px;top:614px;">Reread HDD ID</div>
<div class="cb" style="left:417px;top:630px"></div>
<div class="t " style="left:435px;top:630px;">Give Boot Code mode initialization signal</div>
<div class="cb" style="left:417px;top:646px"></div>
<div class="t " style="left:435px;top:646px;">Give command mode initialization signal</div>
<div class="cb" style="left:417px;top:662px"></div>
<div class="t " style="left:435px;top:662px;">Send Online Mode activation signal to terminal</div>
<div class="cb" style="left:417px;top:678px"></div>
<div class="t " style="left:435px;top:678px;">Unlock Tech Mode, drive prepared by utility</div>
<div class="cb" style="left:417px;top:694px"></div>
<div class="t " style="left:435px;top:694px;">Correct HDD ID in RAM at utility start</div>
<div class="gb" style="left:409px;top:727px;width:424px;height:37px"></div>
<div class="gl" style="left:416px;top:722px">Tech Mode unlocking at utility start</div>
<div class="a" style="left:417px;top:736px;width:408px;height:22px;background:#fff;border-top:1px solid #a0a0a0;border-left:1px solid #a0a0a0;border-right:1px solid #fff;border-bottom:1px solid #fff;box-shadow:inset 1px 1px 0 #696969, inset -1px -1px 0 #e3e3e3"></div>
<div class="t " style="left:421px;top:742px;">none</div>
<div class="btn" style="left:807px;top:739px;width:17px;height:18px"></div>
<div class="a" style="left:562px;top:769px;width:131px;height:25px;background:#f0f0f0;border:1px solid #696969;box-shadow:inset 1px 1px 0 #fff, inset -1px -1px 0 #7a7a7a"></div>
<div class="t" style="left:561px;top:775px;width:132px;text-align:center;word-spacing:1px">Utility start</div>
<div class="btn" style="left:702px;top:769px;width:131px;height:25px"></div>
<div class="t" style="left:701px;top:775px;width:132px;text-align:center">Exit</div>
<svg class="a" style="left:0;top:0" width="1251" height="1012">
<path d="M820 200.5 L829.5 210 M829.5 200.5 L820 210" stroke="#000" stroke-width="1.1"/>
<rect x="820" y="498" width="1" height="1" fill="#606060"/>
<rect x="820" y="234" width="1" height="1" fill="#606060"/>
<rect x="826" y="498" width="1" height="1" fill="#606060"/>
<rect x="826" y="234" width="1" height="1" fill="#606060"/>
<rect x="820" y="499" width="1" height="1" fill="#606060"/>
<rect x="820" y="233" width="1" height="1" fill="#606060"/>
<rect x="821" y="499" width="1" height="1" fill="#606060"/>
<rect x="821" y="233" width="1" height="1" fill="#606060"/>
<rect x="825" y="499" width="1" height="1" fill="#606060"/>
<rect x="825" y="233" width="1" height="1" fill="#606060"/>
<rect x="826" y="499" width="1" height="1" fill="#606060"/>
<rect x="826" y="233" width="1" height="1" fill="#606060"/>
<rect x="821" y="500" width="1" height="1" fill="#606060"/>
<rect x="821" y="232" width="1" height="1" fill="#606060"/>
<rect x="822" y="500" width="1" height="1" fill="#606060"/>
<rect x="822" y="232" width="1" height="1" fill="#606060"/>
<rect x="824" y="500" width="1" height="1" fill="#606060"/>
<rect x="824" y="232" width="1" height="1" fill="#606060"/>
<rect x="825" y="500" width="1" height="1" fill="#606060"/>
<rect x="825" y="232" width="1" height="1" fill="#606060"/>
<rect x="822" y="501" width="1" height="1" fill="#606060"/>
<rect x="822" y="231" width="1" height="1" fill="#606060"/>
<rect x="823" y="501" width="1" height="1" fill="#606060"/>
<rect x="823" y="231" width="1" height="1" fill="#606060"/>
<rect x="824" y="501" width="1" height="1" fill="#606060"/>
<rect x="824" y="231" width="1" height="1" fill="#606060"/>
<rect x="823" y="502" width="1" height="1" fill="#606060"/>
<rect x="823" y="230" width="1" height="1" fill="#606060"/>
<rect x="426" y="553" width="1" height="1" fill="#000"/>
<rect x="425" y="554" width="1" height="1" fill="#000"/>
<rect x="426" y="554" width="1" height="1" fill="#000"/>
<rect x="420" y="555" width="1" height="1" fill="#000"/>
<rect x="424" y="555" width="1" height="1" fill="#000"/>
<rect x="425" y="555" width="1" height="1" fill="#000"/>
<rect x="426" y="555" width="1" height="1" fill="#000"/>
<rect x="420" y="556" width="1" height="1" fill="#000"/>
<rect x="421" y="556" width="1" height="1" fill="#000"/>
<rect x="423" y="556" width="1" height="1" fill="#000"/>
<rect x="424" y="556" width="1" height="1" fill="#000"/>
<rect x="425" y="556" width="1" height="1" fill="#000"/>
<rect x="420" y="557" width="1" height="1" fill="#000"/>
<rect x="421" y="557" width="1" height="1" fill="#000"/>
<rect x="422" y="557" width="1" height="1" fill="#000"/>
<rect x="423" y="557" width="1" height="1" fill="#000"/>
<rect x="424" y="557" width="1" height="1" fill="#000"/>
<rect x="421" y="558" width="1" height="1" fill="#000"/>
<rect x="422" y="558" width="1" height="1" fill="#000"/>
<rect x="423" y="558" width="1" height="1" fill="#000"/>
<rect x="422" y="559" width="1" height="1" fill="#000"/>
<path d="M812 745 h7 l-3.5 4 z" fill="#000"/>
</svg>
</body></html>
